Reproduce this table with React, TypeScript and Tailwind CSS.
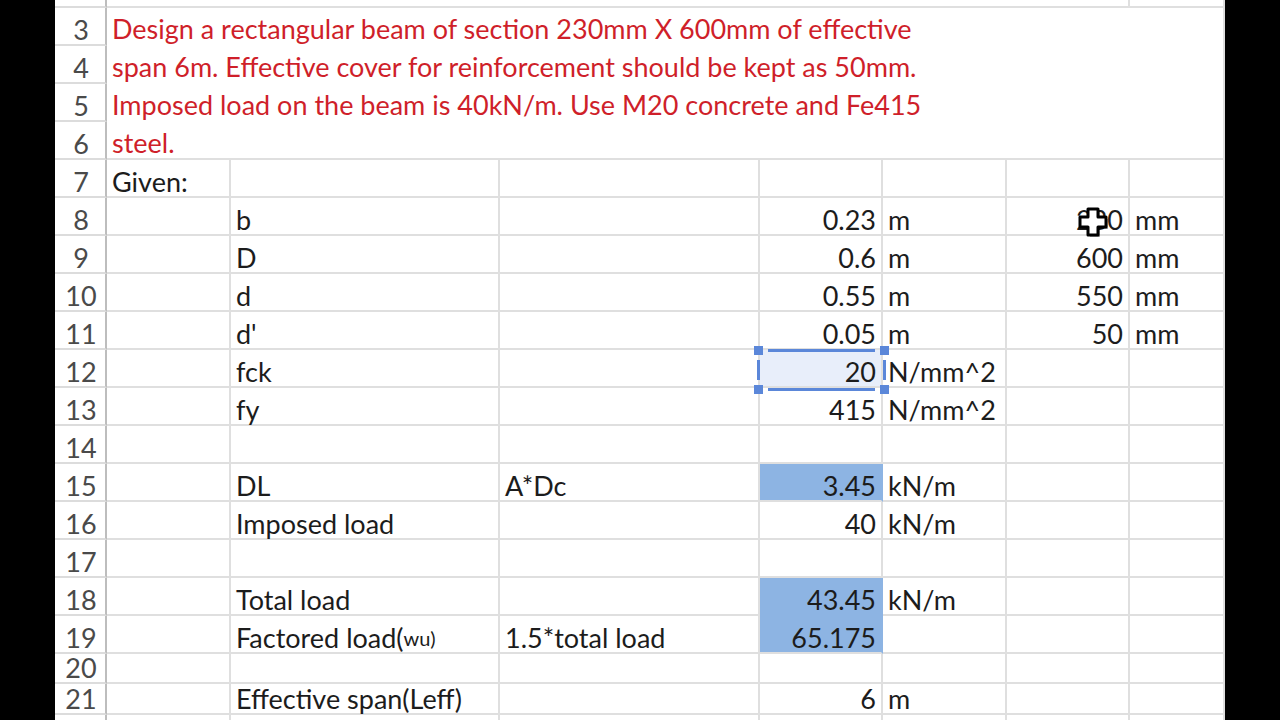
import React from 'react';

type Row = {
  n: number;
  h: string;
  a?: string;
  b?: React.ReactNode;
  c?: string;
  d?: string;
  e?: string;
  f?: string;
  g?: string;
  fill?: boolean;
  fillBottom?: boolean;
  selected?: boolean;
  cursor?: boolean;
};

const ROWS: Row[] = [
  { n: 7, h: 'h-[38px]', a: 'Given:' },
  { n: 8, h: 'h-[38px]', b: 'b', d: '0.23', e: 'm', f: '230', g: 'mm', cursor: true },
  { n: 9, h: 'h-[38px]', b: 'D', d: '0.6', e: 'm', f: '600', g: 'mm' },
  { n: 10, h: 'h-[38px]', b: 'd', d: '0.55', e: 'm', f: '550', g: 'mm' },
  { n: 11, h: 'h-[38px]', b: "d'", d: '0.05', e: 'm', f: '50', g: 'mm' },
  { n: 12, h: 'h-[38px]', b: 'fck', d: '20', e: 'N/mm^2', selected: true },
  { n: 13, h: 'h-[38px]', b: 'fy', d: '415', e: 'N/mm^2' },
  { n: 14, h: 'h-[38px]' },
  { n: 15, h: 'h-[38px]', b: 'DL', c: 'A*Dc', d: '3.45', e: 'kN/m', fill: true },
  { n: 16, h: 'h-[38px]', b: 'Imposed load', d: '40', e: 'kN/m' },
  { n: 17, h: 'h-[38px]' },
  { n: 18, h: 'h-[38px]', b: 'Total load', d: '43.45', e: 'kN/m', fill: true, fillBottom: true },
  {
    n: 19,
    h: 'h-[38px]',
    b: (
      <>
        Factored load(<span className="text-[20px]">wu)</span>
      </>
    ),
    c: '1.5*total load',
    d: '65.175',
    fill: true,
  },
  { n: 20, h: 'h-[30px]' },
  { n: 21, h: 'h-[31px]', b: 'Effective span(Leff)', d: '6', e: 'm' },
];

const COLS = 'grid grid-cols-[52px_124px_269px_260px_123px_124px_123px_95px]';
const CELL = 'relative flex items-end border-r-2 border-b-2 border-[#dfdfdf] px-[5px] leading-[28px] whitespace-nowrap';

const Header = ({ n, h }: { n?: number; h: string }) => (
  <div className={`${h} flex items-end justify-center border-r-2 border-b-2 border-r-[#bdbdbd] border-b-[#dcdcdc] pl-[2px] leading-[28px] text-[#4a4a4a]`}>
    {n}
  </div>
);

const Cursor = () => (
  <svg width="32" height="32" viewBox="0 0 32 32" className="absolute left-[71px] top-[9px] z-20">
    <path d="M10 2h10v8h8v10h-8v8H10v-8H2V10h8z" fill="#000" opacity="0.3" transform="translate(2 2)" />
    <path d="M10 2h10v8h8v10h-8v8H10v-8H2V10h8z" fill="#fff" stroke="#000" strokeWidth="3" strokeLinejoin="round" />
  </svg>
);

const Selection = () => (
  <div className="pointer-events-none absolute -left-[3px] -top-[1px] z-10 h-[42px] w-[129px]">
    <div className="absolute left-[11px] right-[11px] top-0 h-[3px] bg-[#5b87d9]" />
    <div className="absolute left-[11px] right-[11px] bottom-0 h-[3px] bg-[#5b87d9]" />
    <div className="absolute top-[11px] bottom-[11px] left-0 w-[3px] bg-[#5b87d9]" />
    <div className="absolute top-[11px] bottom-[11px] right-0 w-[3px] bg-[#5b87d9]" />
    <div className="absolute -left-[3px] -top-[3px] h-[9px] w-[9px] bg-[#5b87d9]" />
    <div className="absolute -right-[3px] -top-[3px] h-[9px] w-[9px] bg-[#5b87d9]" />
    <div className="absolute -left-[3px] -bottom-[3px] h-[9px] w-[9px] bg-[#5b87d9]" />
    <div className="absolute -right-[3px] -bottom-[3px] h-[9px] w-[9px] bg-[#5b87d9]" />
  </div>
);

export default function App() {
  return (
    <div
      className="flex h-[720px] w-[1280px] overflow-hidden bg-black text-[27px] text-[#1c1c1c]"
      style={{ fontFamily: 'Lato, "Open Sans", sans-serif' }}
    >
      <div className="w-[55px] shrink-0 bg-black" />

      <div className="w-[1170px] shrink-0 bg-white">
        {/* row 2, cut off at the top */}
        <div className={COLS}>
          <Header h="h-[8px]" />
          <div className="col-span-6 h-[8px] border-r-2 border-b-2 border-[#dfdfdf]" />
          <div className="h-[8px] border-r-2 border-b-2 border-[#dfdfdf]" />
        </div>

        {/* rows 3-6, merged problem statement */}
        <div className={COLS}>
          <div className="flex flex-col">
            {[3, 4, 5, 6].map((n) => (
              <Header key={n} n={n} h="h-[38px]" />
            ))}
          </div>
          <div className="col-span-7 h-[152px] border-r-2 border-b-2 border-[#dfdfdf] px-[5px] pt-[2px] leading-[38px] whitespace-nowrap text-[#cf1f2a]">
            <div>Design a rectangular beam of section 230mm X 600mm of effective</div>
            <div>span 6m. Effective cover for reinforcement should be kept as 50mm.</div>
            <div>Imposed load on the beam is 40kN/m. Use M20 concrete and Fe415</div>
            <div>steel.</div>
          </div>
        </div>

        {ROWS.map((r) => (
          <div key={r.n} className={COLS}>
            <Header n={r.n} h={r.h} />
            <div className={`${CELL} ${r.h}`}>{r.a}</div>
            <div className={`${CELL} ${r.h}`}>{r.b}</div>
            <div className={`${CELL} ${r.h}`}>{r.c}</div>
            <div
              className={`${CELL} ${r.h} justify-end ${
                r.fill ? 'bg-[#8db4e3] border-r-[#8db4e3]' : ''
              } ${r.fillBottom ? 'border-b-[#8db4e3]' : ''} ${r.selected ? 'bg-[#e8eefa]' : ''}`}
            >
              {r.d}
              {r.selected && <Selection />}
            </div>
            <div className={`${CELL} ${r.h}`}>{r.e}</div>
            <div className={`${CELL} ${r.h} justify-end`}>
              {r.f}
              {r.cursor && <Cursor />}
            </div>
            <div className={`${CELL} ${r.h}`}>{r.g}</div>
          </div>
        ))}

        {/* row 22, barely visible */}
        <div className={COLS}>
          <Header h="h-[10px]" />
          {Array.from({ length: 7 }).map((_, i) => (
            <div key={i} className="h-[10px] border-r-2 border-[#dfdfdf]" />
          ))}
        </div>
      </div>

      <div className="flex-1 bg-black" />
    </div>
  );
}
